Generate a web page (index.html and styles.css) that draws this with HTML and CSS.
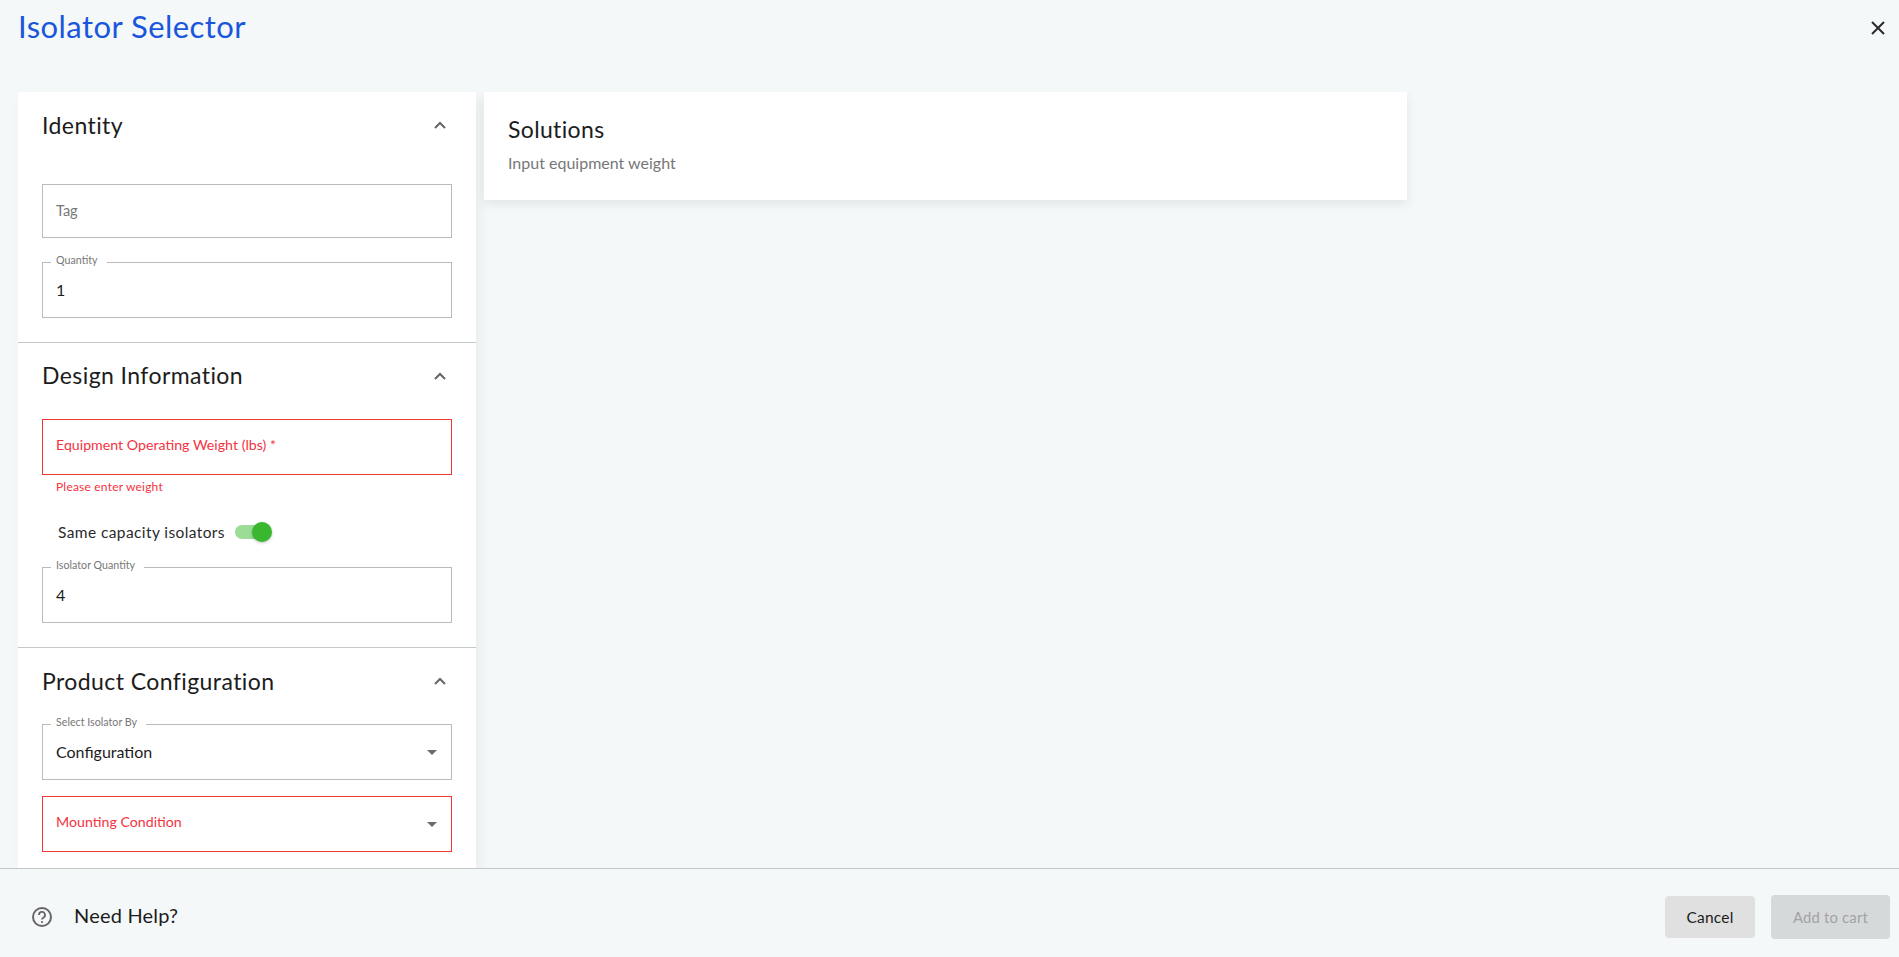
FILE: index.html
```html
<!DOCTYPE html>
<html lang="en">
<head>
<meta charset="utf-8">
<title>Isolator Selector</title>
<link rel="stylesheet" href="styles.css">
</head>
<body>
<div class="page">
  <header class="top">
    <h1 class="title">Isolator Selector</h1>
    <svg class="close" viewBox="0 0 14 14" width="14" height="14"><path d="M1 1l12 12M13 1L1 13" fill="none" stroke="#2b2b2b" stroke-width="2"/></svg>
  </header>
  <main class="main">
    <div class="panel">
      <section class="sec sec-identity">
        <div class="sec-head"><h2>Identity</h2><svg class="chev" viewBox="0 0 12 8" width="12" height="8"><path d="M1 7l5-5 5 5" fill="none" stroke="#666" stroke-width="2"/></svg></div>
        <div class="field f-tag"><span class="ph">Tag</span></div>
        <div class="field f-qty"><label class="lab">Quantity</label><span class="val">1</span></div>
      </section>
      <section class="sec sec-design">
        <div class="sec-head"><h2>Design Information</h2><svg class="chev" viewBox="0 0 12 8" width="12" height="8"><path d="M1 7l5-5 5 5" fill="none" stroke="#666" stroke-width="2"/></svg></div>
        <div class="field err f-weight"><span class="ph">Equipment Operating Weight (lbs) *</span></div>
        <div class="help">Please enter weight</div>
        <div class="toggle-row"><span>Same capacity isolators</span><span class="switch"><span class="track"></span><span class="knob"></span></span></div>
        <div class="field f-iso"><label class="lab">Isolator Quantity</label><span class="val">4</span></div>
      </section>
      <section class="sec sec-product">
        <div class="sec-head"><h2>Product Configuration</h2><svg class="chev" viewBox="0 0 12 8" width="12" height="8"><path d="M1 7l5-5 5 5" fill="none" stroke="#666" stroke-width="2"/></svg></div>
        <div class="field f-by"><label class="lab">Select Isolator By</label><span class="val">Configuration</span><span class="caret"></span></div>
        <div class="field err f-mount"><span class="ph">Mounting Condition</span><span class="caret"></span></div>
      </section>
    </div>
    <div class="card">
      <h2>Solutions</h2>
      <p>Input equipment weight</p>
    </div>
  </main>
  <footer class="foot">
    <div class="help-link">
      <svg viewBox="0 0 20 20" width="20" height="20"><circle cx="10" cy="10" r="9" fill="none" stroke="#666" stroke-width="2"/><path d="M7 8a3 3 0 1 1 4.6 2.4c-1 .7-1.6 1.2-1.6 2.2" fill="none" stroke="#666" stroke-width="1.8"/><circle cx="10" cy="15" r="1.1" fill="#666"/></svg>
      <span class="help-text">Need Help?</span>
    </div>
    <div class="actions">
      <button class="btn">Cancel</button>
      <button class="btn off">Add to cart</button>
    </div>
  </footer>
</div>
</body>
</html>
```
FILE: styles.css
```css
* { box-sizing: border-box; }
html, body { margin: 0; height: 100%; }
body { font-family: "Lato", "Liberation Sans", sans-serif; background: #f4f8f9; color: #1c1c1c; overflow: hidden; }
.page { height: 957px; display: flex; flex-direction: column; }
.top { height: 92px; flex: none; display: flex; justify-content: space-between; align-items: flex-start; padding: 7px 18px 0; }
.title { margin: 0; font-size: 31px; line-height: 38px; font-weight: 400; color: #1a56db; letter-spacing: .45px; }
.close { margin-top: 14px; margin-right: -4px; }
.main { flex: 1; min-height: 0; display: flex; align-items: flex-start; gap: 8px; padding-left: 18px; overflow: hidden; }
.panel { width: 458px; flex: none; box-shadow: 4px 6px 12px rgba(0,0,0,.05); }
.sec { background: #fff; padding: 0 24px; border-bottom: 1px solid #c4c6c7; }
.sec:last-child { border-bottom: 0; height: 220px; }
.sec-identity { height: 251px; }
.sec-design { height: 305px; }
.sec-head { height: 66px; display: flex; justify-content: space-between; align-items: center; padding-right: 6px; }
.sec-head h2 { margin: 0; font-size: 23px; line-height: 30px; font-weight: 400; letter-spacing: .42px; color: #1c1c1c; }
.sec-design .sec-head { height: 64px; }
.sec-design .chev { margin-top: 2px; }
.sec-product .sec-head { height: 65px; }
.chev { display: block; }
.field { position: relative; height: 56px; border: 1px solid #b9bbbc; display: flex; align-items: center; padding: 0 13px; font-size: 16px; background: #fff; }
.field.err { border-color: #f0372f; }
.ph { color: #777; font-size: 14.5px; position: relative; top: -1px; }
.err .ph { color: #f5333f; font-size: 14.2px; top: -3px; }
.val { font-size: 16px; color: #1c1c1c; position: relative; top: -1px; }
.lab { position: absolute; left: 8px; top: -10px; padding: 0 9px 0 5px; background: #fff; font-size: 10.7px; line-height: 14px; color: #777; }
.f-tag { margin-top: 26px; height: 54px; }
.f-qty { margin-top: 24px; }
.f-weight { margin-top: 12px; }
.help { font-size: 12px; line-height: 14px; color: #f5333f; padding-left: 14px; margin-top: 5px; letter-spacing: .2px; }
.toggle-row { height: 36px; margin-top: 20px; display: flex; align-items: center; gap: 10px; padding-left: 16px; font-size: 15.5px; letter-spacing: .4px; color: #2a2a2a; }
.switch { position: relative; width: 37px; height: 20px; display: block; }
.track { position: absolute; left: 0; top: 3px; width: 34px; height: 14px; border-radius: 7px; background: #9bdc97; }
.knob { position: absolute; left: 17px; top: 0; width: 20px; height: 20px; border-radius: 50%; background: #38b72f; box-shadow: 0 1px 3px rgba(0,0,0,.25); }
.f-iso { margin-top: 17px; }
.f-by { margin-top: 11px; }
.f-mount { margin-top: 16px; }
.caret { position: absolute; right: 14px; top: 50%; margin-top: -2px; border: 5px solid transparent; border-top-color: #6b6b6b; border-bottom: 0; }
.card { width: 923px; height: 108px; background: #fff; padding: 23px 24px; box-shadow: 0 4px 10px rgba(0,0,0,.08); }
.card h2 { margin: 0; font-size: 23px; line-height: 28px; font-weight: 400; letter-spacing: .35px; }
.card p { margin: 10px 0 0; font-size: 16px; line-height: 20px; color: #777; }
.foot { height: 89px; flex: none; border-top: 1px solid #c4c6c7; display: flex; justify-content: space-between; align-items: center; padding: 8px 9px 0 32px; background: #f4f8f9; }
.help-link { display: flex; align-items: center; gap: 22px; font-size: 20px; color: #1c1c1c; letter-spacing: .2px; }
.help-text { position: relative; top: -2px; }
.actions { display: flex; gap: 16px; align-items: center; }
.btn { border: 0; border-radius: 4px; font: inherit; font-size: 15.5px; height: 42px; width: 90px; background: #e0e0e0; color: #1c1c1c; padding: 0; letter-spacing: .2px; }
.btn.off { width: 119px; height: 44px; background: #d6d9da; color: #a1a3a4; font-size: 14.8px; }
```
